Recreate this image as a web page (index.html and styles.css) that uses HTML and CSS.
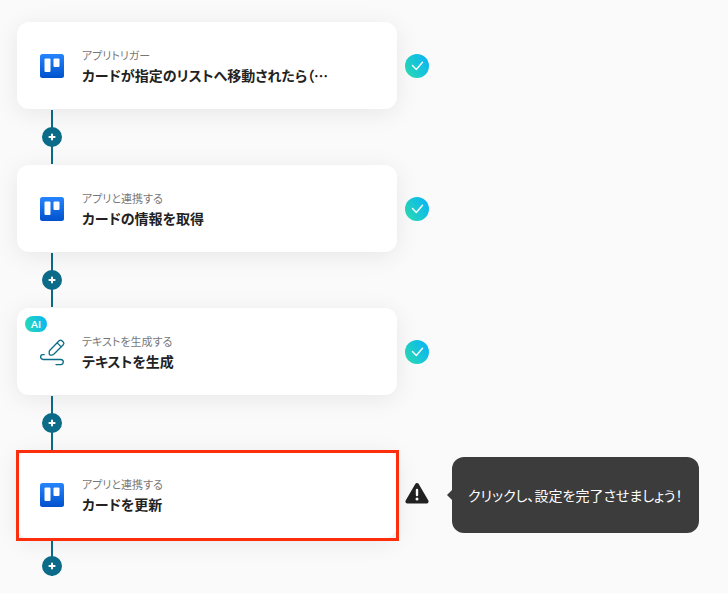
FILE: index.html
```html
<!DOCTYPE html>
<html lang="ja">
<head>
    <meta charset="UTF-8">
    <meta name="viewport" content="width=device-width, initial-scale=1.0">
    <title>フロー</title>
    <link rel="stylesheet" href="styles.css">
</head>
<body>
    <!-- 共通アイコン -->
    <svg class="defs" aria-hidden="true">
        <defs>
            <linearGradient id="blue" x1="0" y1="0" x2="0" y2="1">
                <stop offset="0" stop-color="#2684ff"/>
                <stop offset="1" stop-color="#0052cc"/>
            </linearGradient>
            <linearGradient id="teal" x1="0" y1="0.8" x2="1" y2="0.2">
                <stop offset="0" stop-color="#2adbb5"/>
                <stop offset="1" stop-color="#08b4f5"/>
            </linearGradient>
        </defs>
        <symbol id="board" viewBox="0 0 24 24">
            <rect width="24" height="24" rx="2.5" fill="url(#blue)"/>
            <rect x="4.5" y="4.5" width="6" height="13.5" rx="1" fill="#fff"/>
            <rect x="13.5" y="4.5" width="6" height="8.5" rx="1" fill="#fff"/>
        </symbol>
        <symbol id="check" viewBox="0 0 24 24">
            <circle cx="12" cy="12" r="12" fill="url(#teal)"/>
            <path d="M7.5 11.5 L11.3 15.5 L17.5 8.3" fill="none" stroke="#fff" stroke-width="1.4" stroke-linecap="round" stroke-linejoin="round"/>
        </symbol>
        <symbol id="plus" viewBox="0 0 20 20">
            <path d="M10 7.4 V12.6 M7.4 10 H12.6" stroke="#fff" stroke-width="2" stroke-linecap="round"/>
        </symbol>
    </svg>

    <main class="flow">
        <div class="step">
            <button class="card" type="button">
                <svg class="icon"><use href="#board"/></svg>
                <span class="text">
                    <span class="label">アプリトリガー</span>
                    <span class="title">カードが指定のリストへ移動されたら（…</span>
                </span>
            </button>
            <svg class="status" role="img" aria-label="完了"><use href="#check"/></svg>
        </div>
        <div class="connector">
            <button class="add" type="button" aria-label="追加"><svg><use href="#plus"/></svg></button>
        </div>

        <div class="step">
            <button class="card" type="button">
                <svg class="icon"><use href="#board"/></svg>
                <span class="text">
                    <span class="label">アプリと連携する</span>
                    <span class="title">カードの情報を取得</span>
                </span>
            </button>
            <svg class="status" role="img" aria-label="完了"><use href="#check"/></svg>
        </div>
        <div class="connector">
            <button class="add" type="button" aria-label="追加"><svg><use href="#plus"/></svg></button>
        </div>

        <div class="step">
            <button class="card" type="button">
                <span class="badge">AI</span>
                <svg class="icon" viewBox="0 0 24 24" fill="none" stroke="#0b6b88" stroke-width="1.3" stroke-linecap="round" stroke-linejoin="round">
                    <path d="M9.9 10.2 L19.1 0.8 Q20.5 -0.6 21.9 0.7 L23.2 1.9 Q24.6 3.3 23.3 4.8 L14 14 Q12.6 15.1 11.7 15.1 H10.6 Q9.2 15.1 9.2 13.7 V12 Q9.2 11 9.9 10.2 Z M17.2 2.9 L21.2 6.9"/>
                    <path d="M4.2 14.6 H2.8 Q0.6 14.8 0.6 16.8 Q0.8 19.4 3.2 19.5 H20.8 Q23.3 19.7 23.3 22 Q23.2 24.5 20.8 24.6 H16"/>
                </svg>
                <span class="text">
                    <span class="label">テキストを生成する</span>
                    <span class="title">テキストを生成</span>
                </span>
            </button>
            <svg class="status" role="img" aria-label="完了"><use href="#check"/></svg>
        </div>
        <div class="connector">
            <button class="add" type="button" aria-label="追加"><svg><use href="#plus"/></svg></button>
        </div>

        <div class="step">
            <button class="card selected" type="button">
                <svg class="icon"><use href="#board"/></svg>
                <span class="text">
                    <span class="label">アプリと連携する</span>
                    <span class="title">カードを更新</span>
                </span>
            </button>
            <svg class="status" viewBox="0 0 24 24" role="img" aria-label="未設定">
                <path d="M12 2 L21.6 18.4 H2.4 Z" fill="#222" stroke="#222" stroke-width="4" stroke-linejoin="round"/>
                <path d="M12 7 V12" stroke="#fff" stroke-width="2.4" stroke-linecap="round"/>
                <circle cx="12" cy="16" r="1.5" fill="#fff"/>
            </svg>
            <div class="tooltip" role="tooltip">クリックし、設定を完了させましょう！</div>
        </div>
        <div class="connector last">
            <button class="add" type="button" aria-label="追加"><svg><use href="#plus"/></svg></button>
        </div>
    </main>
</body>
</html>
```

FILE: styles.css
```css
* {
    box-sizing: border-box;
}

body {
    margin: 0;
    background: #fafafa;
    font-family: "Noto Sans CJK JP", sans-serif;
    font-feature-settings: "palt";
}

button {
    font: inherit;
    font-feature-settings: inherit;
    border: none;
    cursor: pointer;
}

.defs {
    position: absolute;
    width: 0;
    height: 0;
}

.flow {
    padding: 22px 17px 17px;
}

/* カード + ステータス + 吹き出し */
.step {
    display: grid;
    grid-template-columns: minmax(200px, 380px) 24px auto;
    align-items: center;
    column-gap: 8px;
}

.card {
    position: relative;
    display: flex;
    align-items: center;
    gap: 18px;
    padding: 24px 23px;
    border-radius: 12px;
    background: #fff;
    box-shadow: 0 4px 24px rgba(0, 0, 0, 0.08);
    color: #222;
    text-align: left;
}

.icon {
    width: 24px;
    height: 24px;
    flex: none;
    overflow: visible;
}

.text {
    min-width: 0;
}

.label,
.title {
    display: block;
    white-space: nowrap;
}

.label {
    font-size: 11px;
    line-height: 19px;
    color: #777;
}

.title {
    overflow: hidden;
    font-size: 14px;
    line-height: 20px;
    font-weight: 700;
    text-overflow: ellipsis;
}

.badge {
    position: absolute;
    top: 8px;
    left: 8px;
    padding: 0 6px;
    border-radius: 8px;
    background: linear-gradient(75deg, #2adbb5, #08b4f5);
    color: #fff;
    font-family: Lato, sans-serif;
    font-size: 10px;
    font-weight: 700;
    line-height: 16px;
}

/* 選択中のカードを囲む赤枠 */
.selected::after {
    content: "";
    position: absolute;
    inset: -1px -2px -3px -1px;
    border: 3px solid #fc2e0c;
}

.status {
    width: 24px;
    height: 24px;
    overflow: visible;
}

.connector {
    display: flex;
    align-items: center;
    width: 70px;
    height: 56px;
    background: linear-gradient(#0b6b88, #0b6b88) center / 2px 54px no-repeat;
}

.add {
    width: 20px;
    height: 20px;
    margin: 0 auto;
    padding: 0;
    border-radius: 50%;
    background: #0b6b88;
}

.add svg {
    display: block;
    width: 20px;
    height: 20px;
}

.last {
    align-items: flex-end;
    height: 38px;
    background-size: 2px 100%;
}

.tooltip {
    position: relative;
    justify-self: start;
    margin-left: 15px;
    padding: 28px 16px;
    border-radius: 12px;
    background: #3c3c3c;
    color: #fff;
    font-size: 14px;
    line-height: 20px;
    white-space: nowrap;
}

.tooltip::before {
    content: "";
    position: absolute;
    top: 50%;
    right: 100%;
    border: solid transparent;
    border-width: 5px 5px 5px 0;
    border-right-color: #3c3c3c;
    transform: translateY(-50%);
}
```
